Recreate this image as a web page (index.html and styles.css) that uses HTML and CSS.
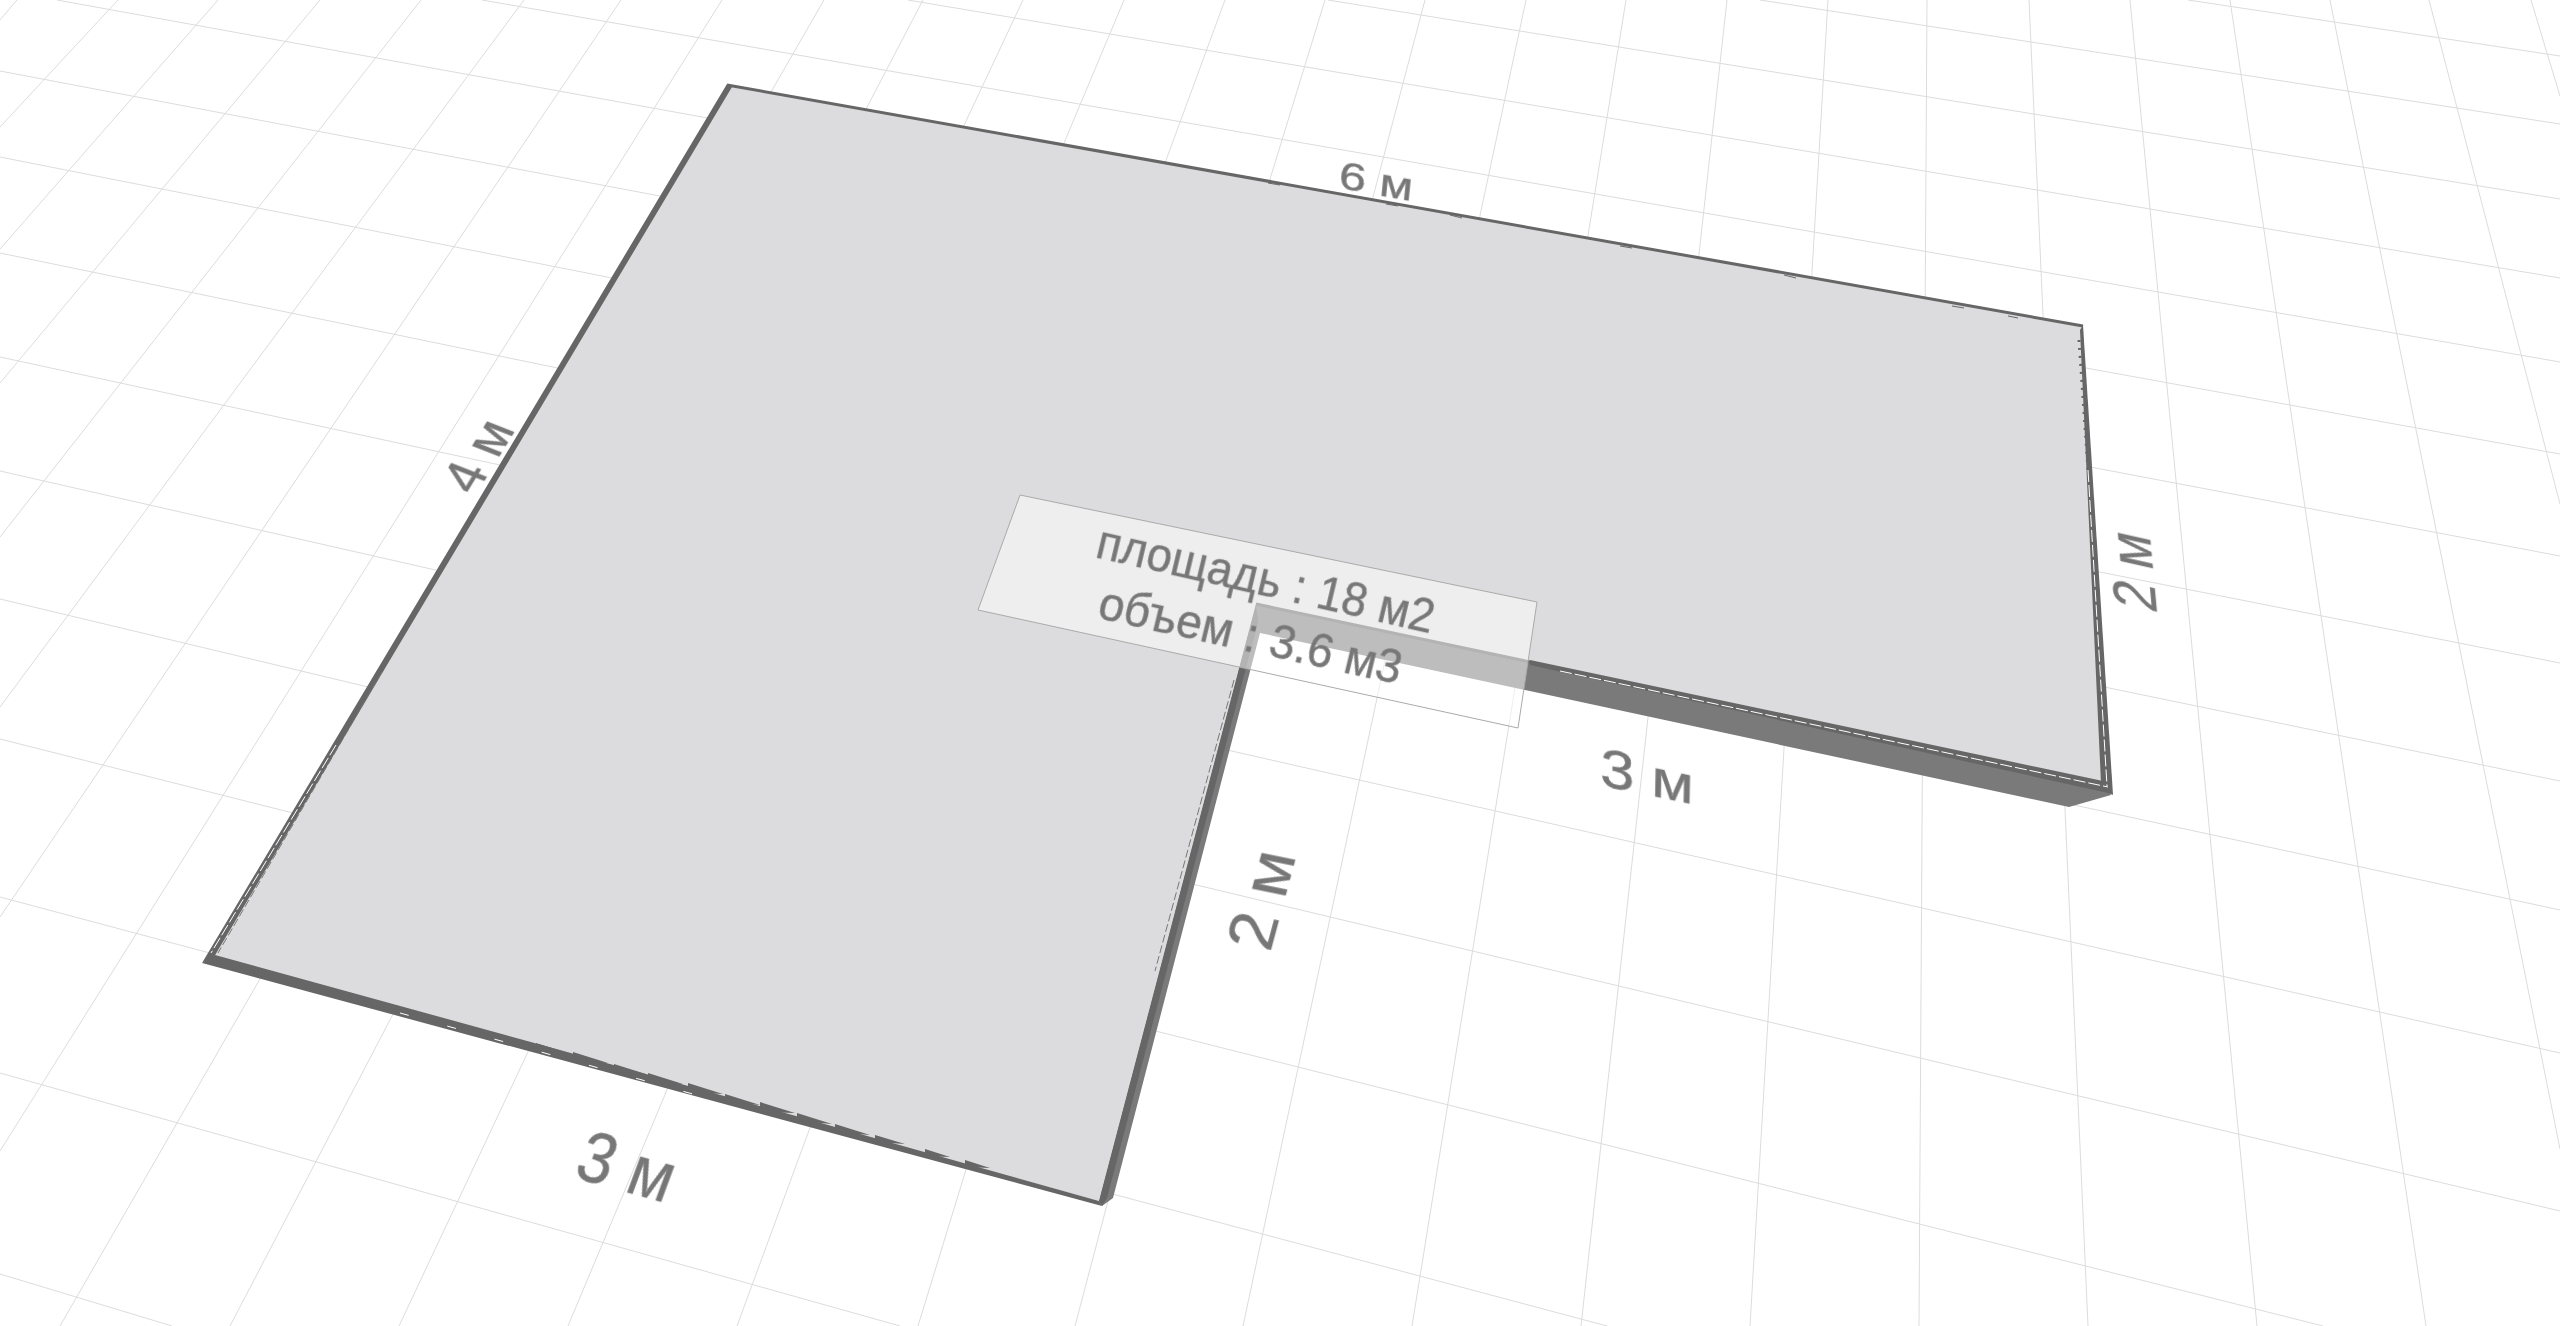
FILE: index.html
```html
<!DOCTYPE html>
<html lang="ru">
<head>
<meta charset="utf-8">
<title>План помещения</title>
<link rel="stylesheet" href="styles.css">
</head>
<body>
<main class="scene">
<svg class="canvas" viewBox="0 0 2560 1326" width="2560" height="1326" xmlns="http://www.w3.org/2000/svg">
  <path class="grid" d="M2188 0L2560 56M1760 0L2560 124M1328 0L2560 199M908 0L2560 278M482 0L2560 362M57 0L2560 454M0 71L2560 556M0 157L2560 663M0 253L2560 781M0 357L2560 910M0 471L2560 1053M0 599L2560 1211M0 739L2323 1326M0 897L1607 1326M0 1073L900 1326M0 1274L172 1326"/>
  <path class="grid" d="M17 0L0 20M118 0L0 127M218 0L0 249M320 0L0 383M421 0L0 537M524 0L0 707M621 0L0 917M722 0L0 1151M824 0L60 1326M923 0L230 1326M1023 0L399 1326M1124 0L568 1326M1225 0L737 1326M1325 0L918 1326M1425 0L1075 1326M1526 0L1243 1326M1626 0L1412 1326M1727 0L1581 1326M1828 0L1750 1326M1927 0L1919 1326M2029 0L2088 1326M2130 0L2257 1326M2230 0L2426 1326M2330 0L2560 1149M2429 0L2560 504M2531 0L2560 96"/>

  <polygon class="wall" points="1256,604 2103,783 2111,795 2069,807 1260,633 1113,1198 1102,1206 1099,1201"/>
  <polygon class="floor" points="727,85 2083,326 2103,783 1256,604 1099,1201 213,958"/>

  <polygon class="edge" points="1099,1201 1256,604 1258,622 1107,1198 1102,1206"/>
  <polygon class="edge" points="1530,660 2103,781 2113,795 2108,793 1530,665"/>
  <polygon class="edge" points="202,963 215,955 560,1050 1099,1201 1102,1206"/>
  <polygon class="edge" points="727,84 202,963 214,957 387,665 732,87"/>
  <polygon class="edge" points="2083,325 2113,795 2101,783 2080,330"/>
  <path class="edge-line" d="M727 85L2083 326M1256 604L1530 662"/>
  <path class="edge" d="M536 1043L571 1054L536 1051ZM573 1052L608 1063L573 1061ZM614 1064L649 1075L614 1072ZM648 1073L683 1084L648 1082ZM688 1083L723 1094L688 1092ZM725 1094L760 1105L725 1102ZM760 1102L795 1113L760 1112ZM797 1113L832 1124L797 1121ZM835 1124L870 1135L835 1132ZM875 1135L905 1144L875 1142ZM925 1149L950 1157L925 1156ZM965 1160L990 1168L965 1167Z"/>
  <path class="tick" d="M1268 183L1280 185M1386 204L1398 206M1450 215L1462 218M1620 246L1632 248M1784 275L1796 278M1952 306L1964 308M2008 316L2018 318"/>
  <path class="ticks" d="M2079 340L2088 470"/>
  <path class="dash-dark" d="M382 672L218 953M1234 680L1155 971"/>
  <path class="dash-white" d="M336 745L211 953M2088 470L2107 786M1560 671L2108 787"/>
  <path class="speck" d="M400 1013L700 1096"/>

  <polygon class="panel" points="1020,495 1537,602 1518,728 978,610"/>

  <text class="label" font-size="45" transform="matrix(.978 .222 -.243 1.02 1094 557)">площадь : 18 м2</text>
  <text class="label" font-size="46" transform="matrix(.978 .215 -.243 1 1096 618)">объем : 3.6 м3</text>
  <text class="label" font-size="39" transform="matrix(1.24 .22 -.1 1 1338 188)">6 м</text>
  <text class="label" font-size="53" transform="matrix(1.16 .24 -.02 1 1600 785)">3 м</text>
  <text class="label" font-size="68" transform="matrix(.9 .25 -.37 1 572 1177)">3 м</text>
  <text class="label" font-size="64" transform="matrix(.27 -1 .98 .2 1270 953)">2 м</text>
  <text class="label" font-size="62" transform="matrix(-.075 -.82 .98 .22 2157 614)">2 м</text>
  <text class="label" font-size="50" transform="matrix(.54 -.88 1.02 .4 475 496)">4 м</text>
</svg>
</main>
</body>
</html>
```

FILE: styles.css
```css
html, body {
  margin: 0;
  padding: 0;
  background: #fff;
}

.scene {
  width: 2560px;
  height: 1326px;
  overflow: hidden;
}

.canvas {
  display: block;
}

.grid {
  fill: none;
  stroke: #dcdcdc;
  stroke-width: 1;
}

.wall {
  fill: #7a7a7a;
}

.floor {
  fill: #dcdcde;
}

.edge {
  fill: #666;
}

.edge-line {
  fill: none;
  stroke: #666;
  stroke-width: 3;
}

.tick {
  fill: none;
  stroke: #666;
  stroke-width: 1;
}

.ticks {
  fill: none;
  stroke: #666;
  stroke-width: 3;
  stroke-dasharray: 2 6;
}

.dash-dark {
  fill: none;
  stroke: #777;
  stroke-width: 1;
  stroke-dasharray: 8 3;
}

.dash-white {
  fill: none;
  stroke: #fff;
  stroke-width: 1;
  stroke-dasharray: 12 3;
}

.speck {
  fill: none;
  stroke: #fff;
  stroke-width: 1;
  stroke-dasharray: 9 40;
}

.panel {
  fill: rgba(255, 255, 255, .5);
  stroke: #aaa;
  stroke-width: 1;
}

.label {
  font-family: "Liberation Sans", Arial, sans-serif;
  fill: #777;
  stroke: #808080;
  stroke-width: .5;
  filter: blur(.5px);
}
```
